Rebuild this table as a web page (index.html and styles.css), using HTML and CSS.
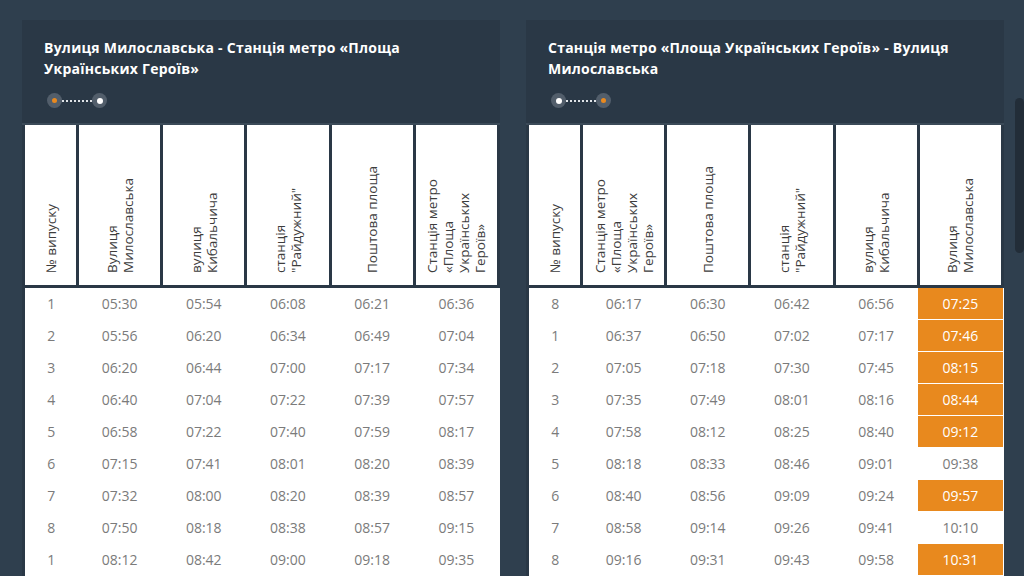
FILE: index.html
```html
<!DOCTYPE html>
<html lang="uk">
<head>
<meta charset="utf-8">
<title>Розклад</title>
<link rel="stylesheet" href="styles.css">
</head>
<body>
<div class="page">
  <section class="panel">
    <header class="panel-head">
      <h2 class="title">Вулиця Милославська - Станція метро «Площа Українських Героїв»</h2>
      <div class="route">
        <span class="stop"><span class="dot orange"></span></span>
        <span class="line"></span>
        <span class="stop"><span class="dot white"></span></span>
      </div>
    </header>
    <table class="sched">
      <colgroup><col class="c-num"><col><col><col><col><col></colgroup>
      <thead>
        <tr>
          <th><div class="vt">№ випуску</div></th>
          <th><div class="vt">Вулиця Милославська</div></th>
          <th><div class="vt">вулиця Кибальчича</div></th>
          <th><div class="vt">станція "Райдужний"</div></th>
          <th><div class="vt">Поштова площа</div></th>
          <th><div class="vt">Станція метро «Площа Українських Героїв»</div></th>
        </tr>
      </thead>
      <tbody>
        <tr><td>1</td><td>05:30</td><td>05:54</td><td>06:08</td><td>06:21</td><td>06:36</td></tr>
        <tr><td>2</td><td>05:56</td><td>06:20</td><td>06:34</td><td>06:49</td><td>07:04</td></tr>
        <tr><td>3</td><td>06:20</td><td>06:44</td><td>07:00</td><td>07:17</td><td>07:34</td></tr>
        <tr><td>4</td><td>06:40</td><td>07:04</td><td>07:22</td><td>07:39</td><td>07:57</td></tr>
        <tr><td>5</td><td>06:58</td><td>07:22</td><td>07:40</td><td>07:59</td><td>08:17</td></tr>
        <tr><td>6</td><td>07:15</td><td>07:41</td><td>08:01</td><td>08:20</td><td>08:39</td></tr>
        <tr><td>7</td><td>07:32</td><td>08:00</td><td>08:20</td><td>08:39</td><td>08:57</td></tr>
        <tr><td>8</td><td>07:50</td><td>08:18</td><td>08:38</td><td>08:57</td><td>09:15</td></tr>
        <tr><td>1</td><td>08:12</td><td>08:42</td><td>09:00</td><td>09:18</td><td>09:35</td></tr>
      </tbody>
    </table>
  </section>

  <section class="panel">
    <header class="panel-head">
      <h2 class="title">Станція метро «Площа Українських Героїв» - Вулиця Милославська</h2>
      <div class="route">
        <span class="stop"><span class="dot white"></span></span>
        <span class="line"></span>
        <span class="stop"><span class="dot orange"></span></span>
      </div>
    </header>
    <table class="sched">
      <colgroup><col class="c-num"><col><col><col><col><col></colgroup>
      <thead>
        <tr>
          <th><div class="vt">№ випуску</div></th>
          <th><div class="vt">Станція метро «Площа Українських Героїв»</div></th>
          <th><div class="vt">Поштова площа</div></th>
          <th><div class="vt">станція "Райдужний"</div></th>
          <th><div class="vt">вулиця Кибальчича</div></th>
          <th><div class="vt">Вулиця Милославська</div></th>
        </tr>
      </thead>
      <tbody>
        <tr><td>8</td><td>06:17</td><td>06:30</td><td>06:42</td><td>06:56</td><td class="hl">07:25</td></tr>
        <tr><td>1</td><td>06:37</td><td>06:50</td><td>07:02</td><td>07:17</td><td class="hl">07:46</td></tr>
        <tr><td>2</td><td>07:05</td><td>07:18</td><td>07:30</td><td>07:45</td><td class="hl">08:15</td></tr>
        <tr><td>3</td><td>07:35</td><td>07:49</td><td>08:01</td><td>08:16</td><td class="hl">08:44</td></tr>
        <tr><td>4</td><td>07:58</td><td>08:12</td><td>08:25</td><td>08:40</td><td class="hl">09:12</td></tr>
        <tr><td>5</td><td>08:18</td><td>08:33</td><td>08:46</td><td>09:01</td><td>09:38</td></tr>
        <tr><td>6</td><td>08:40</td><td>08:56</td><td>09:09</td><td>09:24</td><td class="hl">09:57</td></tr>
        <tr><td>7</td><td>08:58</td><td>09:14</td><td>09:26</td><td>09:41</td><td>10:10</td></tr>
        <tr><td>8</td><td>09:16</td><td>09:31</td><td>09:43</td><td>09:58</td><td class="hl">10:31</td></tr>
      </tbody>
    </table>
  </section>
</div>
<div class="scroll-thumb"></div>
</body>
</html>
```

FILE: styles.css
```css
html, body {
  margin: 0;
  padding: 0;
  height: 100%;
  overflow: hidden;
}
body {
  background: #2f3f4e;
  font-family: "Open Sans", "Liberation Sans", sans-serif;
}
.page {
  display: flex;
  gap: 26px;
  padding: 20px 0 0 22px;
}
.panel {
  width: 478px;
  flex: none;
}
.panel-head {
  background: #2a3846;
  padding: 17px 22px 15px 22px;
  border-bottom: 2px solid #3b4a58;
}
.title {
  margin: 0;
  color: #ffffff;
  font-size: 14px;
  font-weight: 700;
  line-height: 21px;
  letter-spacing: 0.25px;
}
.route {
  display: flex;
  align-items: center;
  margin-top: 14px;
  margin-left: 3px;
  height: 15px;
}
.stop {
  width: 15px;
  height: 15px;
  border-radius: 50%;
  background: #525e6b;
  display: flex;
  align-items: center;
  justify-content: center;
}
.dot {
  border-radius: 50%;
}
.dot.orange {
  width: 5px;
  height: 5px;
  background: #e8891f;
}
.dot.white {
  width: 6px;
  height: 6px;
  background: #ffffff;
}
.line {
  width: 30px;
  border-top: 2px dotted #dfe3e7;
}
.sched {
  width: 100%;
  border-collapse: collapse;
  table-layout: fixed;
  background: #ffffff;
}
.c-num {
  width: 54px;
}
.sched th {
  height: 148px;
  padding: 0 0 12px 0;
  border: 3px solid #2a3846;
  border-top: 0;
  vertical-align: bottom;
  background: #ffffff;
  font-weight: 400;
}
.vt {
  writing-mode: vertical-rl;
  text-orientation: sideways;
  transform: rotate(180deg);
  margin: 0 auto;
  font-size: 13.5px;
  line-height: 16px;
  color: #3d3d3d;
  text-align: start;
  max-height: 120px;
}
.sched td {
  height: 31px;
  padding: 0;
  text-align: center;
  font-size: 14px;
  color: #7b7b7b;
  border-bottom: 1px solid #ffffff;
}
.sched tbody tr td:first-child {
  border-left: 3px solid #2a3846;
}
.sched td.hl {
  background: #e8891e;
  color: #ffffff;
}
.scroll-thumb {
  position: fixed;
  right: 0;
  top: 98px;
  width: 9px;
  height: 155px;
  border-radius: 5px;
  background: #222d38;
}
```
